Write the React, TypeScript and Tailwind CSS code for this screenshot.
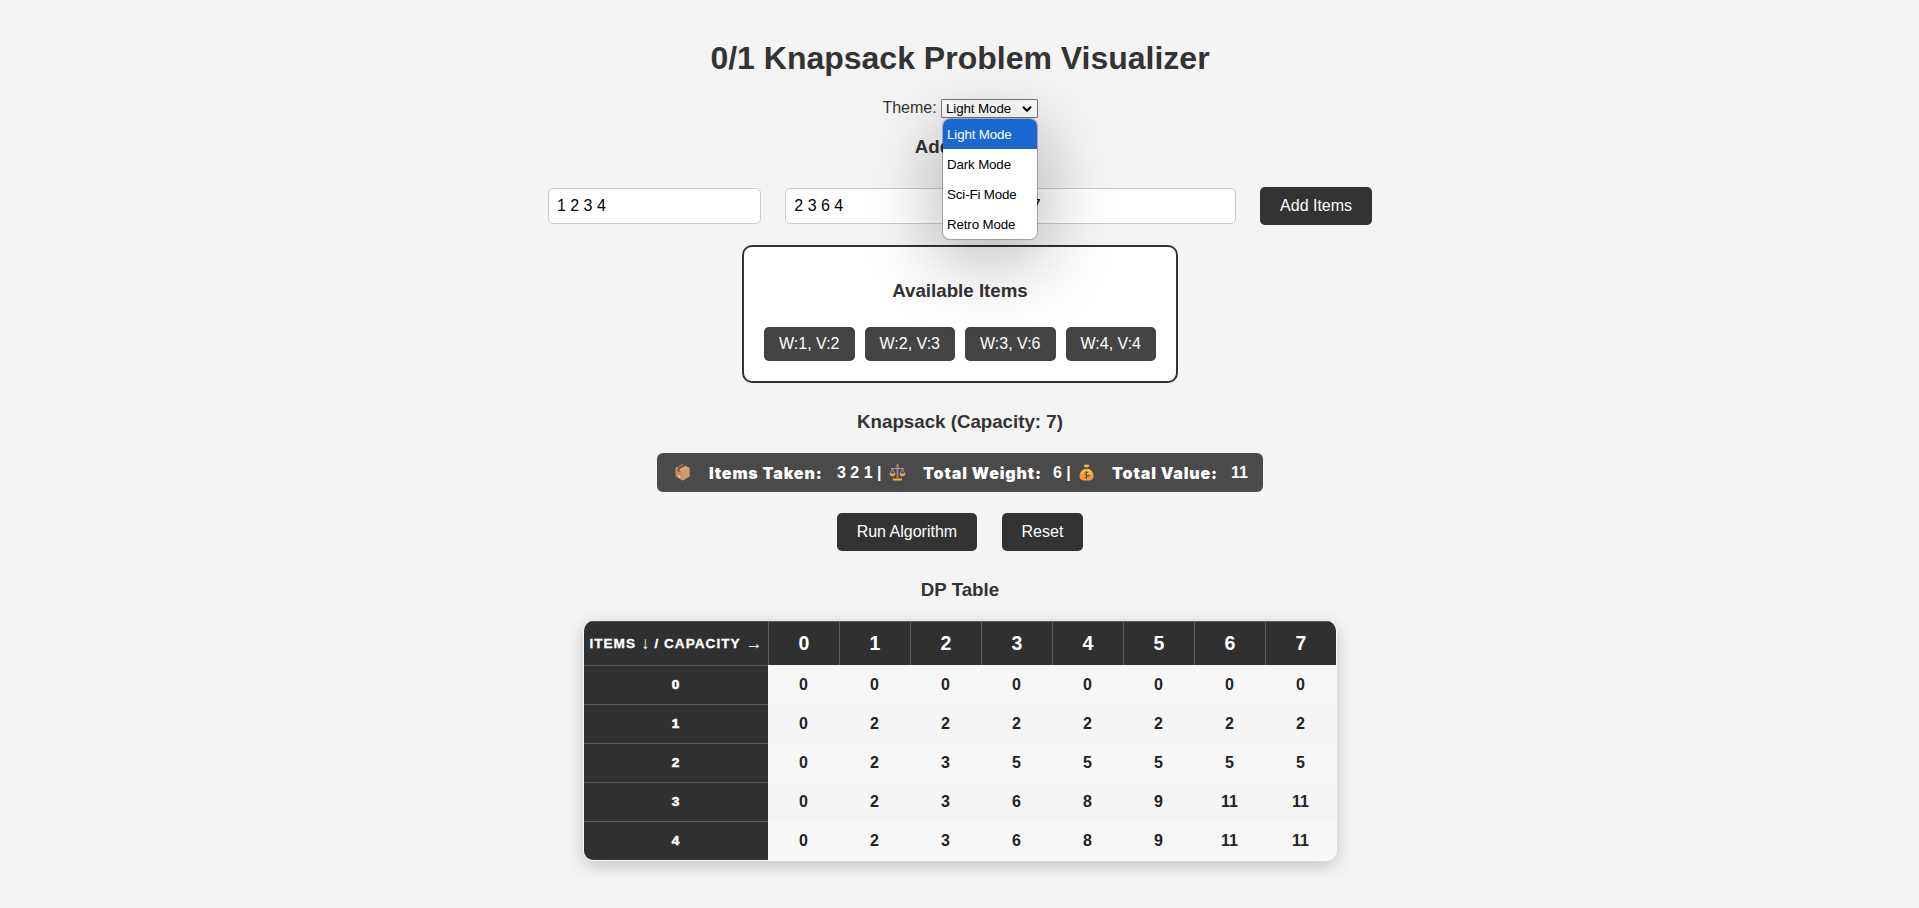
import { ChevronDown } from "lucide-react";

const modes = ["Light Mode", "Dark Mode", "Sci-Fi Mode", "Retro Mode"];
const items = [[1, 2], [2, 3], [3, 6], [4, 4]];
const dp = [
  [0, 0, 0, 0, 0, 0, 0, 0],
  [0, 2, 2, 2, 2, 2, 2, 2],
  [0, 2, 3, 5, 5, 5, 5, 5],
  [0, 2, 3, 6, 8, 9, 11, 11],
  [0, 2, 3, 6, 8, 9, 11, 11],
];
const btn = "h-[38px] rounded-[5px] bg-[#333] px-5 text-base leading-[18px] text-white";
const field = "h-9 w-[213px] rounded-[5px] border border-[#ccc] bg-white px-2 text-base text-black";
const h3 = "text-[18.72px] font-bold leading-[22px]";
const heavy = "shrink-0 whitespace-nowrap pt-px font-['Inter'] text-[16px] tracking-[0.85px] font-black";

function ThemeSelect() {
  return (
    <div className="relative h-[19px] w-[96.5px] rounded-[1px] border border-[#767676] bg-white">
      <div className="flex h-full items-center justify-between pl-[4px] pr-[3px] text-[13.333px] leading-[15px] tracking-[-0.1px] text-black">
        <span className="whitespace-nowrap">Light Mode</span>
        <ChevronDown className="size-[14px]" strokeWidth={3.5} />
      </div>
      <ul className="absolute left-0 top-[18px] z-10 w-[96px] overflow-hidden rounded-[8px] border border-[#00000040] bg-white bg-clip-padding text-[13.333px] tracking-[-0.15px] text-black shadow-[0_16px_70px_8px_rgba(0,0,0,0.25)]">
        {modes.map((m, i) => (
          <li key={m} className={i === 0 ? "flex h-[30px] items-center bg-[#1967d2] pl-1 pt-px text-white" : "flex h-[30px] items-center pl-1 pt-px"}>
            {m}
          </li>
        ))}
      </ul>
    </div>
  );
}

export default function App() {
  return (
    <div className="flex h-[908px] flex-col items-center overflow-hidden bg-[#f4f4f4] pl-px font-['Liberation_Sans',Arial,sans-serif] text-[#333]">
      <h1 className="mt-[40px] text-[32px] font-bold leading-[36px]">0/1 Knapsack Problem Visualizer</h1>
      <div className="mt-[22px] flex h-5 items-start gap-[4.4px] leading-[18px]">
        <label className="pt-px">Theme:</label>
        <div className="pt-[1px]"><ThemeSelect /></div>
      </div>
      <h3 className={`${h3} mt-[18px]`}>Add Items</h3>
      <div className="mt-[29px] flex items-center gap-[24.4px]">
        <input className={field} defaultValue="1 2 3 4" />
        <input className={field} defaultValue="2 3 6 4" />
        <input className={field} defaultValue="7" />
        <button className={btn}>Add Items</button>
      </div>
      <section className="mt-5 flex h-[138px] flex-col items-center rounded-[10px] border-2 border-[#333] bg-white px-5">
        <h3 className={`${h3} mt-[33px]`}>Available Items</h3>
        <div className="mt-[25px] flex gap-2.5">
          {items.map(([w, v]) => (
            <div key={w} className="rounded-[5px] bg-[#444] px-[15px] py-2 leading-[18px] text-white">
              W:{w}, V:{v}
            </div>
          ))}
        </div>
      </section>
      <h3 className={`${h3} mt-[28px]`}>Knapsack (Capacity: 7)</h3>
      <div className="mt-[20px] flex h-[39px] w-[606px] items-center rounded-[6px] bg-[#4a4a4a] pl-[18px] font-bold text-white">
        <BoxIcon />
        <strong className={`${heavy} ml-[19px] w-[128px]`}>Items Taken:</strong>
        <span className="w-[52px] shrink-0">3 2 1 |</span>
        <ScaleIcon />
        <strong className={`${heavy} ml-[17px] w-[130px]`}>Total Weight:</strong>
        <span className="w-[26px] shrink-0">6 |</span>
        <MoneyIcon />
        <strong className={`${heavy} ml-[18px] w-[119px]`}>Total Value:</strong>
        <span>11</span>
      </div>
      <div className="mt-[21px] flex gap-[24.4px]">
        <button className={btn}>Run Algorithm</button>
        <button className={btn}>Reset</button>
      </div>
      <h3 className={`${h3} mt-[28px]`}>DP Table</h3>
      <table className="mt-[20px] border-separate border-spacing-0 overflow-hidden rounded-[10px] border-x border-b border-[#f8f8f8] bg-[#f8f8f8] text-center font-bold text-[#222] shadow-[0_5px_18px_rgba(0,0,0,0.2)]">
        <thead>
          <tr className="h-[44px] bg-[#303030] text-white">
            <th className="w-[184px] whitespace-nowrap border-t border-[#555] p-0 text-[13.6px] tracking-[1px]">
              <div className="flex h-4 items-center justify-center gap-[5px] pt-px [-webkit-text-stroke:0.3px_white]">
                <span>ITEMS</span>
                <span className="text-[17px] font-normal leading-4 tracking-normal [-webkit-text-stroke:0px]">↓</span>
                <span>/ CAPACITY</span>
                <span className="text-[17px] font-normal leading-4 tracking-normal [-webkit-text-stroke:0px]">→</span>
              </div>
            </th>
            {dp[0].map((_, i) => (
              <th key={i} className="w-[71px] border-l border-t border-[#5c5c5c] p-0 text-[19.5px]">{i}</th>
            ))}
          </tr>
        </thead>
        <tbody>
          {dp.map((row, i) => (
            <tr key={i} className="h-[39px] odd:bg-[#f7f7f7] even:bg-[#f5f5f5]">
              <th className="border-t border-[#5c5c5c] bg-[#303030] p-0 pr-px pt-px text-[13.6px] text-white [-webkit-text-stroke:0.6px_white]">{i}</th>
              {row.map((v, j) => (
                <td key={j} className="p-0 pt-px text-base">{v}</td>
              ))}
            </tr>
          ))}
        </tbody>
      </table>
    </div>
  );
}

function BoxIcon() {
  return (
    <svg className="shrink-0" width="15" height="17" viewBox="0 0 15 17">
      <path d="M7.5 .5 14.5 4v8.5l-7 4-7-4V4z" fill="#c68b63" />
      <path d="M7.5 .5 14.5 4l-7 3.5L.5 4z" fill="#dda57c" />
      <path d="M7.5 7.5 14.5 4v8.5l-7 4z" fill="#d39a70" />
      <path d="m2.5 3 7-2.500 2 1-7 3.500v3l-2-1z" fill="#755141" />
      <path d="m3.5 11 2 1v2l-2-1z" fill="#e2d5dc" />
    </svg>
  );
}

function ScaleIcon() {
  return (
    <svg className="shrink-0" width="17" height="17" viewBox="0 0 17 17" fill="none">
      <path d="M8.5 3v11" stroke="#92818f" strokeWidth="2" />
      <path d="M2 4.5h13M3.5 5l-2.500 5M3.5 5 6 10M13.500 5 11 10M13.500 5 16 10" stroke="#a3929c" />
      <path d="M7.500 .5h2v2h-2z" fill="#f2a34e" />
      <path d="M.5 9.500h6q-.5 3-3 3t-3-3M10.500 9.500h6q-.5 3-3 3t-3-3" fill="#f0a055" />
      <path d="M4 14.500h9v2H4z" fill="#f6b51e" />
    </svg>
  );
}

function MoneyIcon() {
  return (
    <svg className="shrink-0" width="15" height="17" viewBox="0 0 15 17">
      <path d="M5 5h5q4.500 3 4.500 7t-4 4.500h-6Q.5 16 .5 12T5 5" fill="#ee9a3a" />
      <path d="M5 5h5q3 2 4 4.500Q8 12 1 9.500 2.500 6.500 5 5" fill="#f5b245" />
      <path d="M4.500 1 7.500 .5l3 .5L9 3.500H6z" fill="#f3bb45" />
      <path d="M5.500 3.500h4v1h-4z" fill="#7a4a30" />
      <path d="M9.300 8.500Q5.700 7.500 5.700 9.500t3.600 1.800-3.600 2.400M7.500 7v8" stroke="#754e2b" fill="none" />
    </svg>
  );
}
